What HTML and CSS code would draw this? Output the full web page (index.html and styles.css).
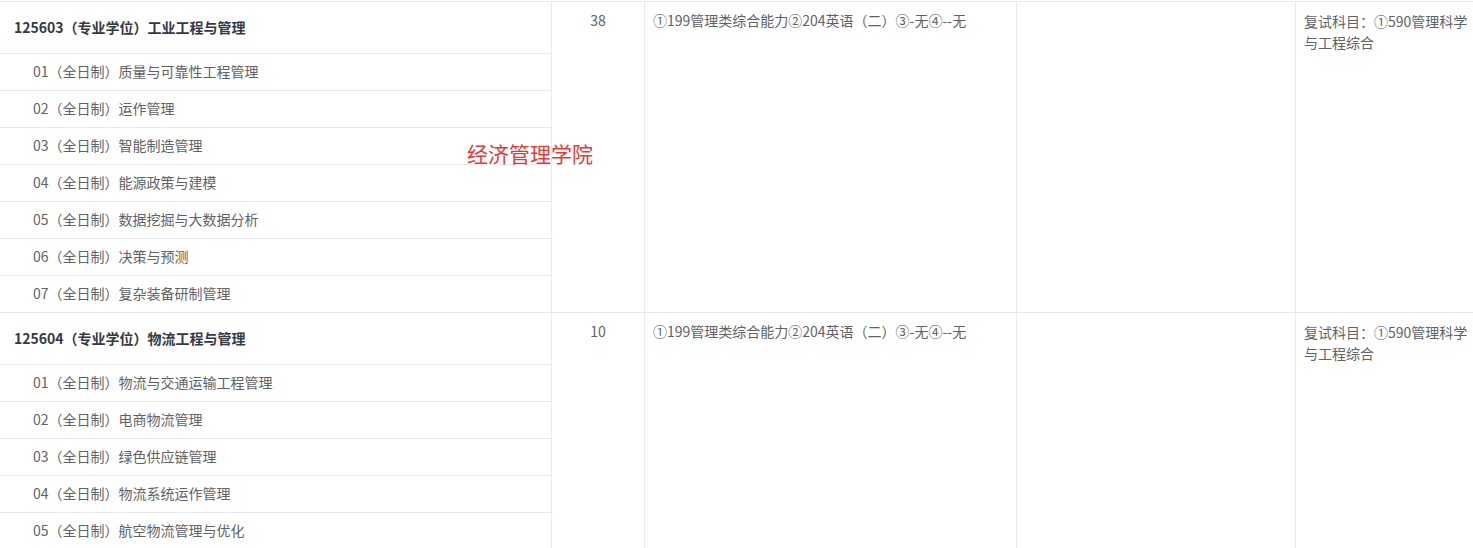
FILE: index.html
```html
<!DOCTYPE html>
<html lang="zh-CN">
<head>
<meta charset="utf-8">
<title>专业目录</title>
<link rel="stylesheet" href="styles.css">
</head>
<body>
<div class="page">
  <div class="table">
    <div class="group">
      <div class="cell majors">
        <div class="major-head">125603（专业学位）工业工程与管理</div>
        <div class="dir">01（全日制）质量与可靠性工程管理</div>
        <div class="dir">02（全日制）运作管理</div>
        <div class="dir">03（全日制）智能制造管理</div>
        <div class="dir">04（全日制）能源政策与建模</div>
        <div class="dir">05（全日制）数据挖掘与大数据分析</div>
        <div class="dir">06（全日制）决策与预测</div>
        <div class="dir">07（全日制）复杂装备研制管理</div>
      </div>
      <div class="cell num">38</div>
      <div class="cell subjects">①199管理类综合能力②204英语（二）③-无④--无</div>
      <div class="cell blank"></div>
      <div class="cell notes">复试科目：①590管理科学与工程综合</div>
    </div>
    <div class="group">
      <div class="cell majors">
        <div class="major-head">125604（专业学位）物流工程与管理</div>
        <div class="dir">01（全日制）物流与交通运输工程管理</div>
        <div class="dir">02（全日制）电商物流管理</div>
        <div class="dir">03（全日制）绿色供应链管理</div>
        <div class="dir">04（全日制）物流系统运作管理</div>
        <div class="dir">05（全日制）航空物流管理与优化</div>
      </div>
      <div class="cell num">10</div>
      <div class="cell subjects">①199管理类综合能力②204英语（二）③-无④--无</div>
      <div class="cell blank"></div>
      <div class="cell notes">复试科目：①590管理科学与工程综合</div>
    </div>
  </div>
  <div class="college">经济管理学院</div>
</div>
</body>
</html>
```
FILE: styles.css
```css
html, body {
  margin: 0;
  padding: 0;
  background: #fff;
  overflow: hidden;
}
body {
  font-family: "Microsoft YaHei", "Noto Sans CJK SC", "Noto Sans", sans-serif;
  font-size: 14px;
  color: #606266;
}
.page {
  position: relative;
  width: 1473px;
  height: 548px;
  overflow: hidden;
}
.table {
  margin-top: 1px;
  border-top: 1px solid #e6e9ed;
}
.group {
  display: grid;
  grid-template-columns: 552px 93px 372px 279px 178px;
}
.cell {
  border-right: 1px solid #e6e9ed;
  border-bottom: 1px solid #e6e9ed;
  line-height: 21px;
}
.cell:last-child {
  border-right: none;
}
.majors {
  display: flex;
  flex-direction: column;
  border-bottom: none;
}
.major-head {
  box-sizing: border-box;
  height: 52px;
  display: flex;
  align-items: center;
  padding-left: 14px;
  font-weight: bold;
  color: #333a44;
  border-bottom: 1px solid #e6e9ed;
}
.dir {
  height: 37px;
  box-sizing: border-box;
  display: flex;
  align-items: center;
  padding-left: 33px;
  padding-bottom: 1px;
  border-bottom: 1px solid #e6e9ed;
}
.num {
  text-align: center;
  padding-top: 8px;
}
.subjects {
  padding: 8px 8px 0 8px;
}
.notes {
  padding: 9px 0 0 8px;
  line-height: 20.5px;
}
.college {
  position: absolute;
  left: 467px;
  top: 139px;
  font-size: 21px;
  line-height: 28px;
  color: #e53935;
}
```
